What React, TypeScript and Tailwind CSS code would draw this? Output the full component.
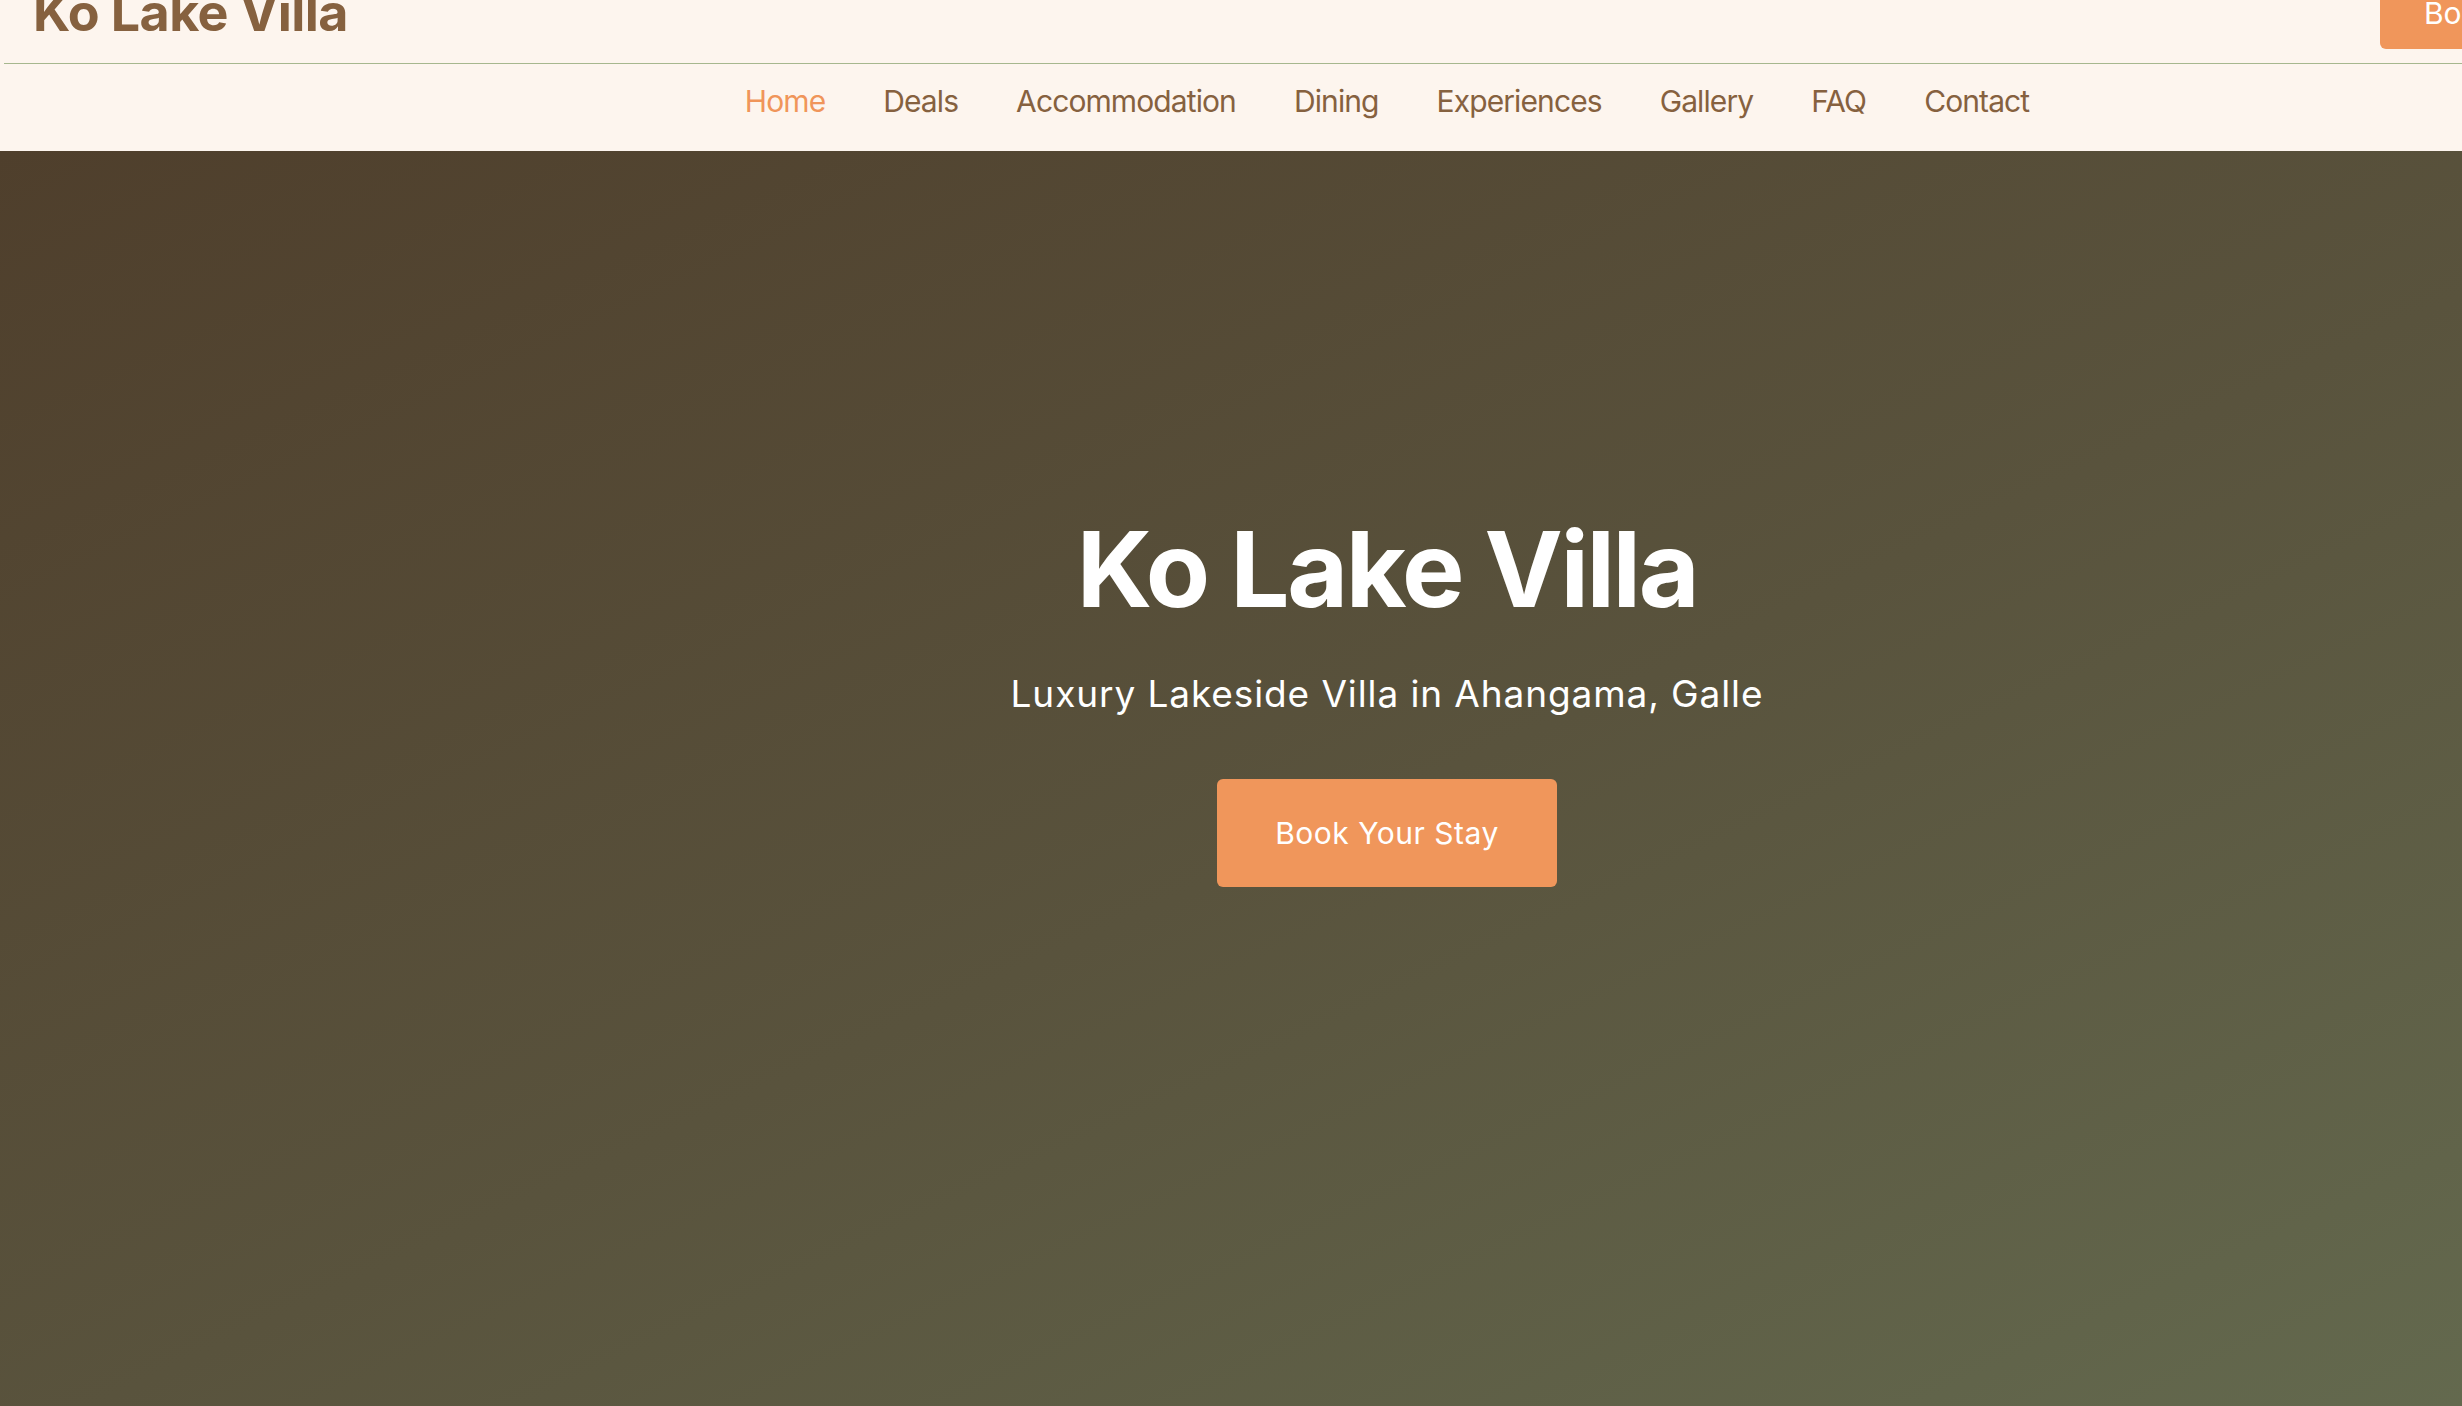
import React from "react";

const navLinks = [
  "Home",
  "Deals",
  "Accommodation",
  "Dining",
  "Experiences",
  "Gallery",
  "FAQ",
  "Contact",
];

export default function App() {
  return (
    <div className="w-full h-screen overflow-hidden bg-[#fdf5ee] font-[Inter,sans-serif]">
      <div className="w-[2774px]">
        {/* Top bar */}
        <header className="-mt-[37px] h-[100px] flex items-center justify-between pl-[33px] pr-[161px]">
          <span className="text-[52px] leading-none font-bold tracking-[-0.6px] text-[#86613f]">
            Ko Lake Villa
          </span>
          <button className="h-[72px] px-[44px] rounded-md bg-[#f0965b] text-white text-[30px]">
            Book Now
          </button>
        </header>
        <div className="ml-[4px] h-px bg-[#a6b78e]"></div>

        {/* Navigation */}
        <nav className="flex justify-center gap-[58px] pt-[19px] pb-[32px] text-[30px] leading-[36px] tracking-[-0.9px] text-[#86613f]">
          {navLinks.map((link) => (
            <a
              key={link}
              href="#"
              className={link === "Home" ? "text-[#f0955a]" : "hover:text-[#f0955a]"}
            >
              {link}
            </a>
          ))}
        </nav>

        {/* Hero */}
        <section className="h-[1300px] bg-gradient-to-br from-[#4f3f2c] via-[#59533d] to-[#656d51] flex flex-col items-center pt-[365px] text-white">
          <h1 className="text-[105px] leading-none font-bold tracking-[-2.4px]">
            Ko Lake Villa
          </h1>
          <p className="mt-[54px] text-[37px] leading-none tracking-[0.9px]">
            Luxury Lakeside Villa in Ahangama, Galle
          </p>
          <button className="mt-[67px] h-[108px] w-[340px] rounded-md bg-[#f0965b] text-[30px] tracking-[0.5px] text-white">
            Book Your Stay
          </button>
        </section>
      </div>
    </div>
  );
}
